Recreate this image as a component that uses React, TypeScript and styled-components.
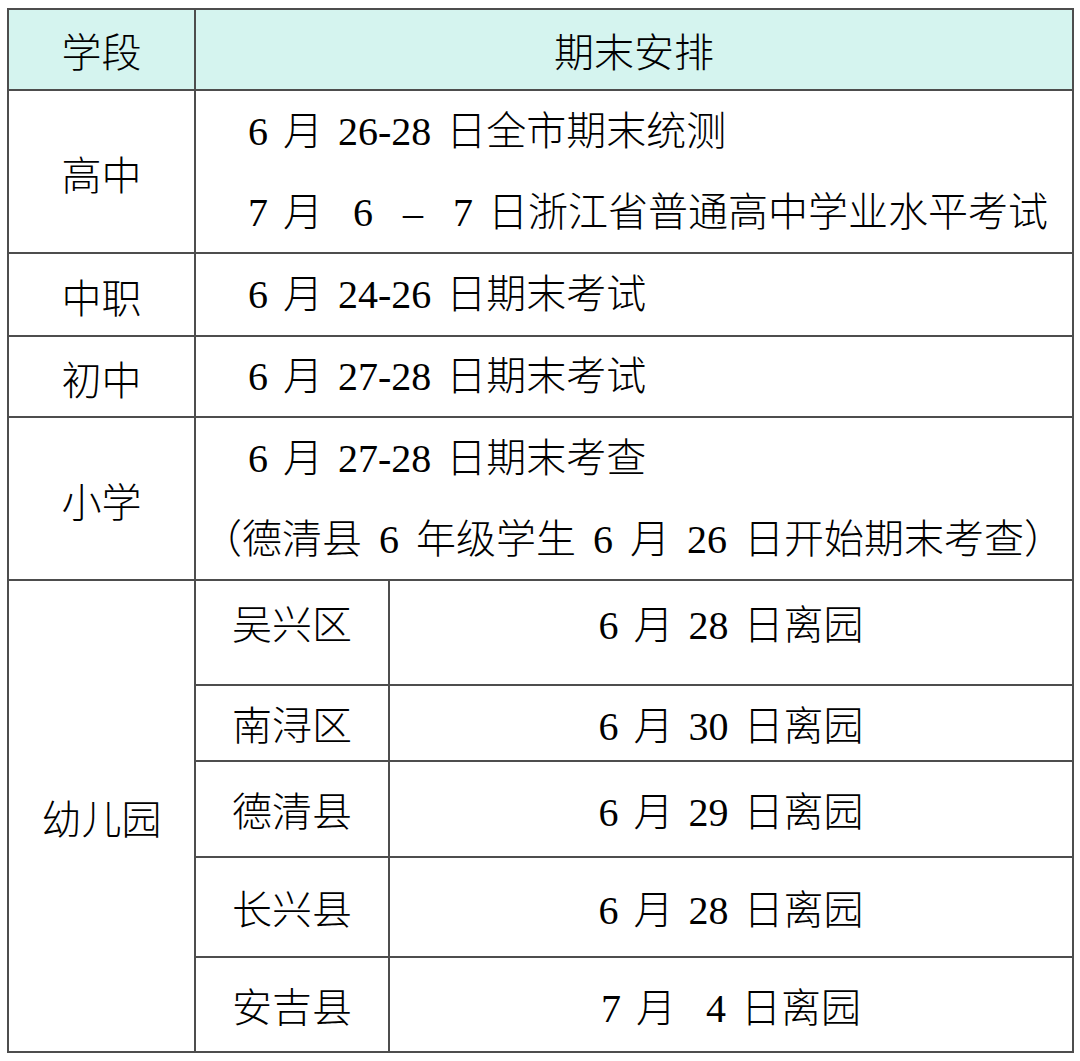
import { createGlobalStyle, styled } from "styled-components";

const GlobalStyle = createGlobalStyle`
  html, body {
    margin: 0;
    padding: 0;
    background: #ffffff;
  }
  body {
    font-family: "Liberation Serif", "Noto Sans CJK SC", serif;
    color: #000000;
  }
`;

const schedule = [
  { stage: "高中", lines: ["6 月 26-28 日全市期末统测", "7 月  6  –  7 日浙江省普通高中学业水平考试"] },
  { stage: "中职", lines: ["6 月 24-26 日期末考试"] },
  { stage: "初中", lines: ["6 月 27-28 日期末考试"] },
  { stage: "小学", lines: ["6 月 27-28 日期末考查", "（德清县 6 年级学生 6 月 26 日开始期末考查）"] },
];

const kindergartens = [
  { area: "吴兴区", date: "6 月 28 日离园", lifted: true },
  { area: "南浔区", date: "6 月 30 日离园" },
  { area: "德清县", date: "6 月 29 日离园" },
  { area: "长兴县", date: "6 月 28 日离园" },
  { area: "安吉县", date: "7 月  4 日离园" },
];

const App = () => {
  return (
    <>
      <GlobalStyle />
      <SPage>
        <STable>
          <SHeadCell>学段</SHeadCell>
          <SHeadCell $wide>期末安排</SHeadCell>
          {schedule.map((row) => (
            <>
              <SLabel key={row.stage + "-label"}>{row.stage}</SLabel>
              <SPlan key={row.stage + "-plan"}>
                {row.lines.map((line) => (
                  <SLine key={line} $paren={line.startsWith("（")}>
                    {line}
                  </SLine>
                ))}
              </SPlan>
            </>
          ))}
          <SLabel $span={kindergartens.length}>幼儿园</SLabel>
          {kindergartens.map((k) => (
            <>
              <SSubCell key={k.area + "-a"} $lifted={k.lifted}>
                {k.area}
              </SSubCell>
              <SSubCell key={k.area + "-d"} $lifted={k.lifted}>
                {k.date}
              </SSubCell>
            </>
          ))}
        </STable>
      </SPage>
    </>
  );
};

export default App;

const SPage = styled.div`
  padding: 8px 0 0 7px;
`;

const STable = styled.div`
  display: grid;
  width: 1067px;
  grid-template-columns: 185px 192px 682px;
  grid-template-rows: 79px 161px 81px 79px 161px 103px 74px 94px 98px 93px;
  gap: 2px;
  padding: 2px;
  box-sizing: border-box;
  background: #4d4d4d;
  font-size: 40px;
  font-weight: 300;
  word-spacing: 5px;
`;

const SHeadCell = styled.div<{ $wide?: boolean }>`
  grid-column: ${({ $wide }) => ($wide ? "2 / 4" : "1")};
  background: #d5f4ef;
  display: flex;
  align-items: center;
  justify-content: center;
`;

const SLabel = styled.div<{ $span?: number }>`
  grid-column: 1;
  grid-row: ${({ $span }) => ($span ? `span ${$span}` : "auto")};
  background: #ffffff;
  display: flex;
  align-items: center;
  justify-content: center;
  padding-top: 2px;
`;

const SPlan = styled.div`
  grid-column: 2 / 4;
  background: #ffffff;
  display: flex;
  flex-direction: column;
  justify-content: center;
`;

const SLine = styled.div<{ $paren?: boolean }>`
  line-height: 81px;
  white-space: pre;
  padding-left: ${({ $paren }) => ($paren ? "6px" : "52px")};
  word-spacing: ${({ $paren }) => ($paren ? "7px" : "inherit")};
`;

const SSubCell = styled.div<{ $lifted?: boolean }>`
  background: #ffffff;
  display: flex;
  align-items: center;
  justify-content: center;
  white-space: pre;
  padding-bottom: ${({ $lifted }) => ($lifted ? "22px" : "0")};
`;
